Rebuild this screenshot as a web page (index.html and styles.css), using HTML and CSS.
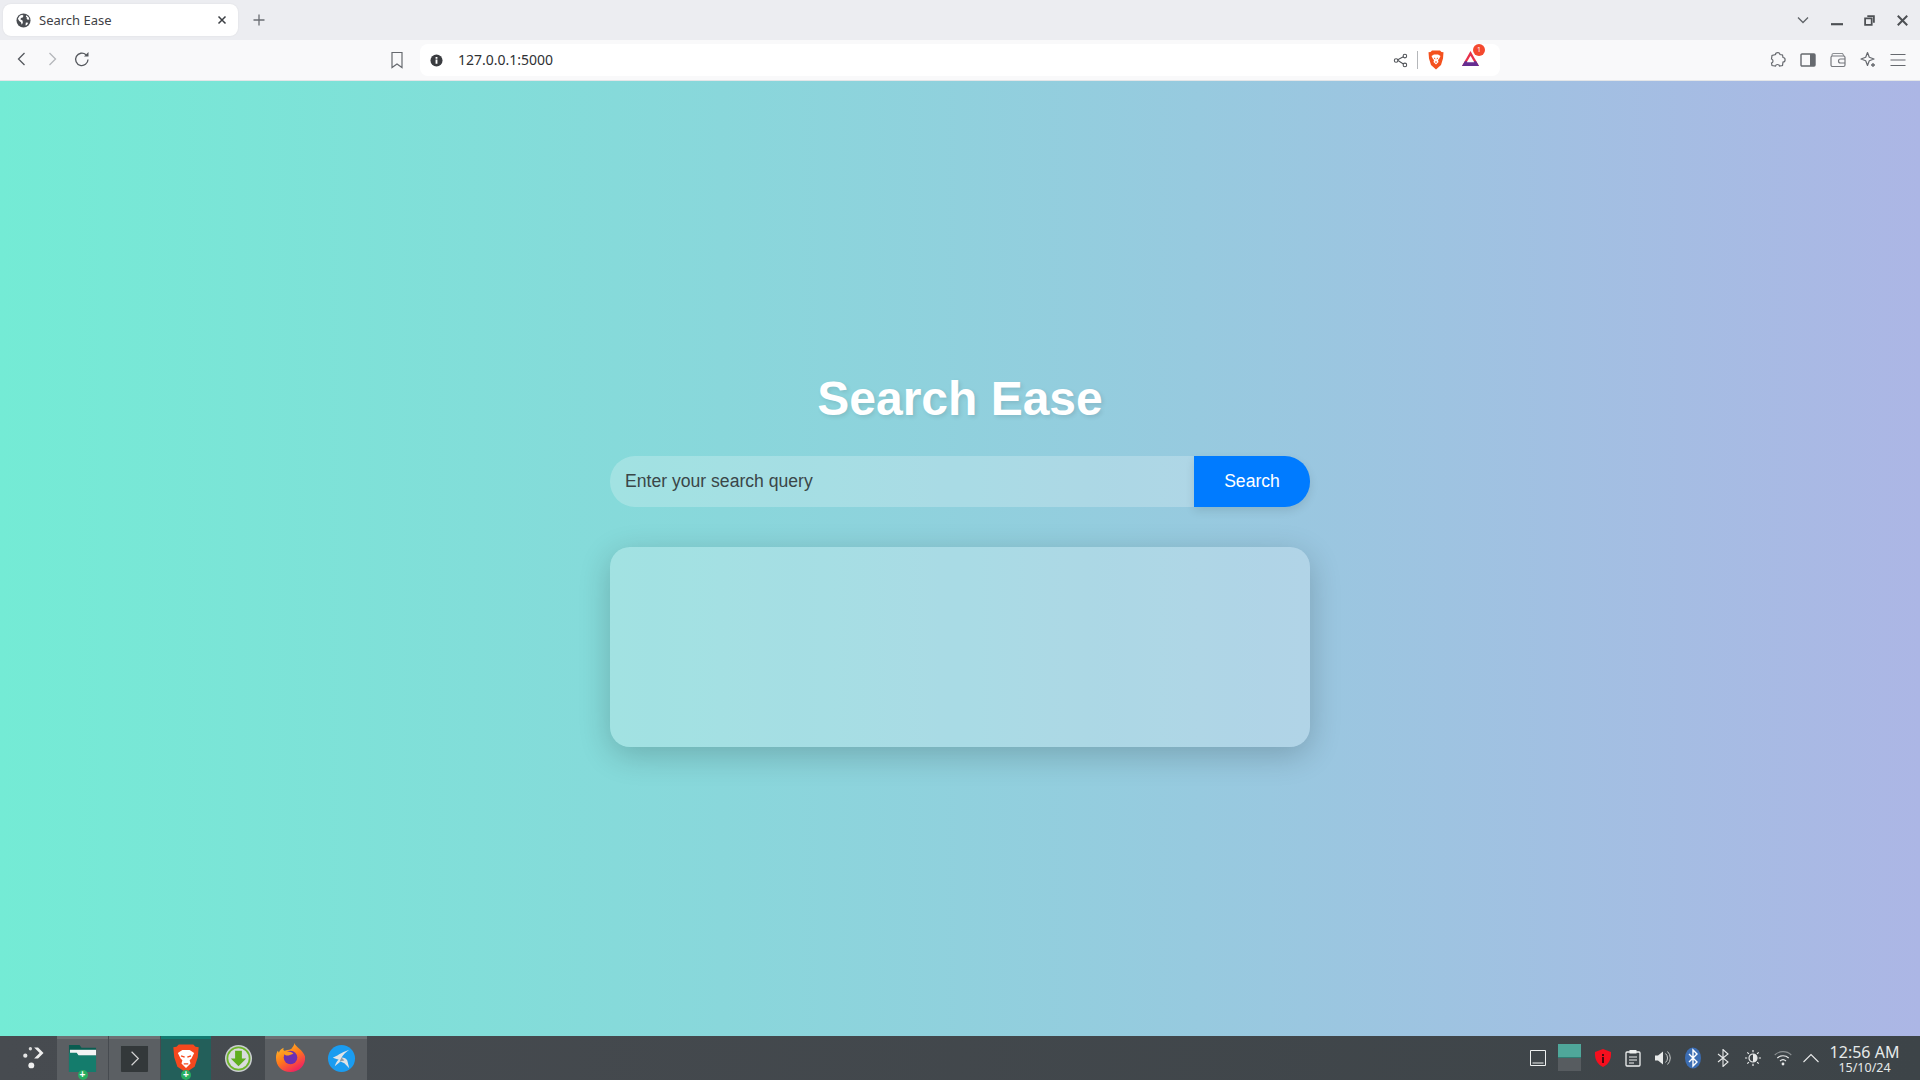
FILE: index.html
```html
<!DOCTYPE html>
<html lang="en">
<head>
<meta charset="utf-8">
<title>Search Ease</title>
<link rel="stylesheet" href="styles.css">
</head>
<body>
<header class="tabstrip">
  <div class="tab">
    <svg class="tab-globe" viewBox="0 0 16 16"><circle cx="8" cy="8" r="7.500" fill="#4a4d52"/><path d="M4 2.800l2.500-1 1.500 1-.8 2-2 .5-.4 1.700 2.200 1 .3 2.500-1.200 2-.8-2.600-1.800-1.400L2 6zM11 2.500l2.500 2 .8 2.500-1.800.3-1.200-1.200.4-1.400-1.200-.8zM10.500 10l2.500.3-1.300 2.400-1.600.5z" fill="#fff"/></svg>
    <span class="tab-title">Search Ease</span>
    <svg class="tab-close" viewBox="0 0 10 10"><path d="M1.500 1.500l7 7M8.500 1.500l-7 7" stroke="#3c3f44" stroke-width="1.500" fill="none"/></svg>
  </div>
  <svg class="new-tab" viewBox="0 0 12 12"><path d="M6 .5v11M.5 6h11" stroke="#6a6d73" stroke-width="1.300" fill="none"/></svg>
  <div class="window-controls">
    <svg class="wc-chevron" viewBox="0 0 12 8"><path d="M1 1.500l5 5 5-5" stroke="#5f6368" stroke-width="1.300" fill="none"/></svg>
    <svg class="wc-min" viewBox="0 0 10 10"><path d="M0 8.500h10" stroke="#4d5054" stroke-width="1.800" fill="none"/></svg>
    <svg class="wc-restore" viewBox="0 0 10 10"><path d="M3 1h6v6M1 3h6v6H1z" stroke="#4d5054" stroke-width="1.600" fill="none"/></svg>
    <svg class="wc-close" viewBox="0 0 10 10"><path d="M.7.700l8.600 8.600M9.300.700l-8.600 8.600" stroke="#4d5054" stroke-width="1.800" fill="none"/></svg>
  </div>
</header>

<nav class="toolbar">
  <div class="nav-buttons">
    <svg class="nav-icon" viewBox="0 0 16 16"><path d="M10.500 2L4.500 8l6 6" stroke="#55585d" stroke-width="1.300" fill="none"/></svg>
    <svg class="nav-icon" viewBox="0 0 16 16"><path d="M5.500 2l6 6-6 6" stroke="#b5b7ba" stroke-width="1.300" fill="none"/></svg>
    <svg class="nav-icon" viewBox="0 0 16 16"><path d="M14 8.500A6.200 6.200 0 1 1 12 3.800" stroke="#55585d" stroke-width="1.300" fill="none"/><path d="M10 5.500h4.500V1z" fill="#55585d"/></svg>
  </div>
  <svg class="bookmark" viewBox="0 0 14 18"><path d="M2 1.500h10v15l-5-3.500-5 3.500z" stroke="#66696e" stroke-width="1.200" fill="none"/></svg>
  <div class="omnibox">
    <svg class="info" viewBox="0 0 14 14"><circle cx="7" cy="7" r="6.500" fill="#3a3c40"/><path d="M6 6h2v4.500H6zM6 3.300h2v1.700H6z" fill="#fff"/></svg>
    <span class="url">127.0.0.1:5000</span>
    <svg class="share" viewBox="0 0 16 16"><path d="M11.500 3.800L4.500 7.500l7 4.500" stroke="#4f5257" stroke-width="1.100" fill="none"/><circle cx="12.700" cy="3.300" r="1.900" fill="#fff" stroke="#4f5257" stroke-width="1.100"/><circle cx="3.300" cy="8" r="1.900" fill="#fff" stroke="#4f5257" stroke-width="1.100"/><circle cx="12.700" cy="12.700" r="1.900" fill="#fff" stroke="#4f5257" stroke-width="1.100"/></svg>
    <span class="omni-divider"></span>
    <svg class="brave-small" viewBox="0 0 16 20"><path d="M4 .5h8l1.500 1.500 2 .2-.5 6.300-2 6.500L8 19.500 3 15 1 8.500.5 2.200 2.500 2z" fill="#f4511e"/><path d="M3.500 6l2.500-1.500h4L12.500 6l-1.500 3-1 1 .5 2L8 14.500 5.500 12l.5-2-1-1z" fill="#fff"/><path d="M6 8l1.300.8M10 8l-1.300.8M7 12h2" stroke="#f4511e" stroke-width="1" fill="none"/></svg>
    <div class="bat-wrap">
      <svg class="bat" viewBox="0 0 20 18"><path d="M10 1l9 16H1z" fill="#e8304a"/><path d="M1 17l3-5h12l3 5z" fill="#662d91"/><path d="M10 6l4 7H6z" fill="#fff"/></svg>
      <span class="bat-badge">1</span>
    </div>
  </div>
  <div class="toolbar-right">
    <svg class="tool-icon" viewBox="0 0 18 18"><path d="M6.500 3.500C6.500 1 11 1 11 3.500L13.500 4l.5 2.500c2.800 0 2.800 4.500 0 4.500l-.5 3.500-3 .5c-.5-2-3.500-2-4 0l-3.500-.5-.5-2.500c2-.5 2-3.500 0-4L3 4.500z" stroke="#66696e" stroke-width="1.200" fill="none"/></svg>
    <svg class="tool-icon" viewBox="0 0 18 18"><rect x="2" y="3" width="14" height="12" rx="1" stroke="#66696e" stroke-width="1.400" fill="none"/><rect x="11" y="3" width="5" height="12" fill="#66696e"/></svg>
    <svg class="tool-icon" viewBox="0 0 18 18"><path d="M3 5V4a1.500 1.500 0 0 1 1.500-1.500h9L15 5" stroke="#8d9094" stroke-width="1.100" fill="none"/><rect x="2" y="5" width="14" height="10.500" rx="1.500" stroke="#77797e" stroke-width="1.200" fill="none"/><path d="M16 8h-4.500a2 2 0 0 0 0 4H16" stroke="#77797e" stroke-width="1.200" fill="none"/></svg>
    <svg class="tool-icon" viewBox="0 0 18 18"><path d="M8.500 1.500l1.800 4.700 4.700 1.800-4.700 1.800-1.800 4.700-1.800-4.700L2 8l4.700-1.800z" stroke="#66696e" stroke-width="1.200" fill="none" stroke-linejoin="round"/><path d="M14 12v4M12 14h4" stroke="#66696e" stroke-width="1.300" fill="none"/></svg>
    <svg class="tool-icon" viewBox="0 0 18 18"><path d="M1.500 3.500h15M1.500 9h15M1.500 14.500h15" stroke="#66696e" stroke-width="1.200" fill="none"/></svg>
  </div>
</nav>

<main class="page">
  <h1 class="title">Search Ease</h1>
  <form class="search-form">
    <input class="search-input" type="text" placeholder="Enter your search query">
    <button class="search-button" type="button">Search</button>
  </form>
  <section class="results"></section>
</main>

<footer class="taskbar">
  <div class="launcher">
    <svg class="launcher-icon" viewBox="0 0 26 26"><circle cx="8" cy="3" r="1.800" fill="#d8d8d8"/><circle cx="2.500" cy="10.500" r="2.300" fill="#e6e6e6"/><circle cx="9" cy="21" r="3.200" fill="#f0f0f0"/><path d="M13 2l5 0 7 7-7 7-5 0 7-7z" fill="#eee" transform="translate(1 0) scale(.85)"/></svg>
  </div>
  <div class="task task-light">
    <svg class="task-icon" viewBox="0 0 30 30"><path d="M1 1h11l2 3h15v25H1z" fill="#0a5c50"/><rect x="2" y="6" width="27" height="6" fill="#f4f4f4"/><path d="M1 9h8l2 3h18v17H1z" fill="#147c6c"/></svg>
    <span class="plus-badge">+</span>
  </div>
  <div class="task task-light task-term">
    <svg class="task-icon" viewBox="0 0 30 30"><rect x="1" y="1" width="28" height="28" rx="1" fill="#33383a"/><path d="M1 1h28v1H1z" fill="#5d6266"/><path d="M12 8l7 7-7 7" stroke="#d5d5d5" stroke-width="1.200" fill="none"/></svg>
  </div>
  <div class="task task-teal">
    <svg class="brave-icon" viewBox="0 0 30 32"><path d="M7 .5h16l2.500 2.500 3.500.5-1 11-3.500 10.500L15 31.500 5.500 25 2 14.500 1 3.500 4.500 3z" fill="#f4481e"/><path d="M6 10l5-3.500h8L24 10l-3 6-2 2 1 3.500-5 5-5-5 1-3.500-2-2z" fill="#fff"/><path d="M9.500 13l4 1.500M20.500 13l-4 1.500M12.500 22h5" stroke="#f4481e" stroke-width="1.500" fill="none"/></svg>
    <span class="plus-badge">+</span>
  </div>
  <div class="task task-dark">
    <svg class="task-icon" viewBox="0 0 30 30"><circle cx="15" cy="15" r="14" fill="#c9cdd0"/><circle cx="15" cy="15" r="11.500" fill="#d9dcdd" stroke="#6eb52a" stroke-width="1.800"/><path d="M11.500 7h7v8h4.500L15 23l-8-8h4.500z" fill="#5fae1e"/></svg>
  </div>
  <div class="task task-light">
    <svg class="firefox" viewBox="0 0 32 32"><defs><linearGradient id="fx" x1="0" y1="0" x2="0.600" y2="1"><stop offset="0" stop-color="#ffcb2e"/><stop offset=".55" stop-color="#ff7a1a"/><stop offset="1" stop-color="#f0245f"/></linearGradient></defs><path d="M20 1c1 4 9 7 11 14 1 9-6 16-15 16S1 25 1 16c0-3 1-6 2-7l1 2c1-3 3-4 5-5-1 2 0 3 1 3 4-1 6-1 7-2 1-2 3-3 3-6z" fill="url(#fx)"/><circle cx="16" cy="16" r="7" fill="#6b2fb0"/><path d="M9 11c3-2 8-1 10 1l-5 2c-2 0-4 0-5-3z" fill="#ff9a1f"/></svg>
  </div>
  <div class="task task-light">
    <svg class="task-icon" viewBox="0 0 30 30"><circle cx="15" cy="15" r="14" fill="#1a9cf0"/><path d="M6 14c4-1 8-5 17-8-4 3-6 5-8 8 3 0 5 1 6 3l2 8-5-5-4-2-6 5c1-3 2-5 4-7-2 0-4-1-6-2z" fill="#dfe3e6"/><path d="M15 14l3 3-5 1z" fill="#8d9aa3"/></svg>
  </div>
  <div class="tray">
    <svg class="tray-show" viewBox="0 0 16 16"><path d="M.5.500h15v15H.5zM2.500 13h11" stroke="#eef0f0" stroke-width="1" fill="none"/></svg>
    <div class="pager"><span class="pager-on"></span><span class="pager-off"></span></div>
    <svg class="tray-icon shield" viewBox="0 0 18 20"><path d="M9 1l8 3c.5 7-2 12-8 15C3 16 .5 11 1 4z" fill="#f50f1e"/><path d="M8 6h2v2H8zM8 9h2v6H8z" fill="#4a0a10"/></svg>
    <svg class="tray-icon" viewBox="0 0 16 18"><rect x="1" y="3" width="14" height="14" rx="1" stroke="#eef0f0" stroke-width="1.300" fill="none"/><rect x="4.500" y="1" width="7" height="3.500" fill="#eef0f0"/><path d="M4 8h8M4 11h8M4 14h5" stroke="#eef0f0" stroke-width="1.200" fill="none"/></svg>
    <svg class="tray-icon" viewBox="0 0 18 18"><path d="M1 6.500h3L9 2.500v13L4 11.500H1z" fill="#e8eaea"/><path d="M11.500 4.500a6 6 0 0 1 0 9M13.500 2.500a9 9 0 0 1 0 13" stroke="#c8cbcb" stroke-width="1" fill="none"/></svg>
    <svg class="tray-icon bt" viewBox="0 0 16 22"><ellipse cx="8" cy="11" rx="8" ry="10.500" fill="#3b6db3"/><path d="M4 7l8 8-4 4V3l4 4-8 8" stroke="#fff" stroke-width="1.400" fill="none"/></svg>
    <svg class="tray-icon" viewBox="0 0 12 18"><path d="M1 5l10 8-5 4.500V.500L11 5 1 13" stroke="#e8eaea" stroke-width="1.100" fill="none"/></svg>
    <svg class="tray-icon" viewBox="0 0 18 18"><circle cx="9" cy="9" r="4" fill="none" stroke="#e8eaea" stroke-width="1.200"/><path d="M9 5a4 4 0 0 1 0 8z" fill="#e8eaea"/><path d="M9 1v2.200M9 14.800V17M1 9h2.200M14.800 9H17M3.300 3.300l1.600 1.600M13.100 13.100l1.600 1.600M3.300 14.700l1.600-1.600M13.100 4.900l1.600-1.600" stroke="#e8eaea" stroke-width="1.200" fill="none"/></svg>
    <svg class="tray-icon" viewBox="0 0 18 16"><path d="M.7 5a12 12 0 0 1 16.600 0" stroke="#8b9092" stroke-width="1.100" fill="none"/><path d="M3.300 8a8.500 8.500 0 0 1 11.400 0M6 11a4.500 4.500 0 0 1 6 0" stroke="#e8eaea" stroke-width="1.100" fill="none"/><circle cx="9" cy="14" r="1.400" fill="#e8eaea"/></svg>
    <svg class="tray-up" viewBox="0 0 16 10"><path d="M.500 9l7.500-7.500L15.500 9" stroke="#e8eaea" stroke-width="1.100" fill="none"/></svg>
    <div class="clock">
      <span class="clock-time">12:56 AM</span>
      <span class="clock-date">15/10/24</span>
    </div>
  </div>
</footer>
</body>
</html>
```
FILE: styles.css
```css
* { box-sizing: border-box; }

html, body { margin: 0; padding: 0; height: 100%; }

body {
  display: flex;
  flex-direction: column;
  height: 100vh;
  overflow: hidden;
  font-family: "Liberation Sans", Arial, sans-serif;
}

svg { display: block; flex: none; }

/* Tab strip */
.tabstrip {
  flex: none;
  height: 40px;
  display: flex;
  align-items: center;
  background: #ecedf1;
  padding-left: 3px;
}

.tab {
  width: 235px;
  height: 32px;
  display: flex;
  align-items: center;
  background: #fff;
  border-radius: 8px;
  padding-left: 13px;
  box-shadow: 0 0 2px rgba(0, 0, 0, 0.08);
}

.tab-globe { width: 15px; height: 15px; }

.tab-title {
  margin-left: 8px;
  width: 178px;
  font: 13px "Noto Sans", sans-serif;
  color: #3f4246;
}

.tab-close { width: 10px; height: 10px; }

.new-tab { width: 12px; height: 12px; margin-left: 15px; }

.window-controls {
  margin-left: auto;
  display: flex;
  align-items: center;
  padding-right: 12px;
}

.wc-chevron { width: 12px; height: 8px; }
.wc-min { width: 12px; height: 12px; margin-left: 22px; }
.wc-restore { width: 11px; height: 11px; margin-left: 21px; }
.wc-close { width: 11px; height: 11px; margin-left: 22px; }

/* Toolbar */
.toolbar {
  flex: none;
  height: 41px;
  display: flex;
  align-items: center;
  background: #f9f9fa;
  padding-left: 14px;
  border-bottom: 1px solid #e4e6e8;
}

.nav-buttons { display: flex; gap: 14px; margin-top: -2px; }
.nav-icon { width: 16px; height: 16px; }

.bookmark { width: 14px; height: 18px; margin-left: 300px; margin-top: -1px; }

.omnibox {
  width: 1080px;
  height: 32px;
  margin-left: 16px;
  display: flex;
  align-items: center;
  background: #fff;
  border-radius: 8px;
  padding-left: 10px;
}

.info { width: 13px; height: 13px; }

.url {
  margin-left: 15px;
  margin-top: -2px;
  width: 888px;
  font: 14px "Noto Sans", sans-serif;
  color: #2f3134;
}

.share { width: 15px; height: 15px; margin-left: 47px; }

.omni-divider {
  width: 1px;
  height: 18px;
  margin-left: 9px;
  background: #b5b7ba;
}

.brave-small { width: 16px; height: 20px; margin-left: 10px; }

.bat-wrap { position: relative; margin-left: 17px; }
.bat { width: 19px; height: 17px; margin-top: -3px; }

.bat-badge {
  position: absolute;
  top: -9px;
  left: 12px;
  width: 12px;
  height: 12px;
  border-radius: 50%;
  background: #f4492e;
  color: #fff;
  font: 7px/12px "Noto Sans", sans-serif;
  text-align: center;
}

.toolbar-right {
  margin-left: auto;
  padding-right: 13px;
  display: flex;
  gap: 12px;
}

.tool-icon { width: 18px; height: 18px; }

/* Page */
.page {
  flex: 1;
  min-height: 0;
  display: flex;
  flex-direction: column;
  align-items: center;
  justify-content: center;
  background: linear-gradient(90deg, #74ebd5, #acb6e5);
}

.title {
  margin: 0 0 30px;
  font-size: 48px;
  font-weight: 700;
  color: #fff;
  text-shadow: 2px 2px 4px rgba(0, 0, 0, 0.1);
}

.search-form {
  width: 700px;
  display: flex;
  margin-bottom: 40px;
}

.search-input {
  flex: 1;
  min-width: 0;
  height: 51px;
  padding: 15px;
  border: 0;
  outline: 0;
  border-radius: 25px 0 0 25px;
  background: rgba(255, 255, 255, 0.23);
  font: 17.6px "Liberation Sans", Arial, sans-serif;
  color: #333;
}

.search-input::placeholder { color: #3a4648; opacity: 1; }

.search-button {
  width: 116px;
  border: 0;
  border-radius: 0 25px 25px 0;
  background: #007bff;
  color: #fff;
  font: 17.6px "Liberation Sans", Arial, sans-serif;
  box-shadow: 0 4px 10px rgba(0, 0, 0, 0.1);
}

.results {
  width: 700px;
  height: 200px;
  border-radius: 20px;
  background: rgba(255, 255, 255, 0.23);
  box-shadow: 0 8px 32px rgba(0, 0, 0, 0.2);
}

/* Taskbar */
.taskbar {
  flex: none;
  height: 44px;
  display: flex;
  align-items: stretch;
  background: linear-gradient(90deg, #474b50, #3d4448);
}

.launcher {
  width: 57px;
  display: flex;
  align-items: center;
  justify-content: center;
}

.launcher-icon { width: 24px; height: 24px; margin-left: 12px; margin-top: -1px; }

.task {
  position: relative;
  width: 50px;
  display: flex;
  align-items: center;
  justify-content: center;
  border-top: 3px solid transparent;
}

.task-light {
  background: #5b5f63;
  border-top-color: #6d7174;
  width: 51px;
}

.task-term { margin-left: 1px; margin-right: 1px; }

.task-teal {
  background: #235f5a;
  border-top-color: #137a70;
}

.task-dark {
  width: 54px;
  background: transparent;
}

.task-icon { width: 29px; height: 29px; margin-top: -3px; }
.brave-icon { width: 28px; height: 29px; margin-top: -3px; }
.firefox { width: 31px; height: 33px; margin-top: -5px; }

.plus-badge {
  position: absolute;
  left: 50%;
  bottom: 0;
  width: 10px;
  height: 10px;
  margin-left: -5px;
  border-radius: 50%;
  background: #27ae60;
  color: #fff;
  font: 700 10px/9px "Liberation Sans", sans-serif;
  text-align: center;
}

.tray {
  margin-left: auto;
  display: flex;
  align-items: center;
  gap: 12px;
}

.tray-show { width: 16px; height: 16px; margin-top: -1px; }

.pager {
  width: 23px;
  height: 27px;
  display: flex;
  flex-direction: column;
  margin-right: 1px;
  margin-top: -1px;
}

.pager-on { flex: 1; background: #4fa79a; border-bottom: 1px solid #2f7d74; }
.pager-off { flex: 1; background: #575c60; }

.tray-icon { width: 18px; height: 18px; }
.shield { height: 20px; }
.bt { height: 22px; }
.tray-up { width: 16px; height: 10px; margin-left: -1px; }

.clock {
  width: 90px;
  margin-left: -1px;
  padding-right: 21px;
  display: flex;
  flex-direction: column;
  align-items: center;
  font-family: "Noto Sans", sans-serif;
  color: #e6eaea;
}

.clock-time { font-size: 16px; line-height: 18px; white-space: nowrap; }
.clock-date { font-size: 12.5px; line-height: 13px; white-space: nowrap; }
```
